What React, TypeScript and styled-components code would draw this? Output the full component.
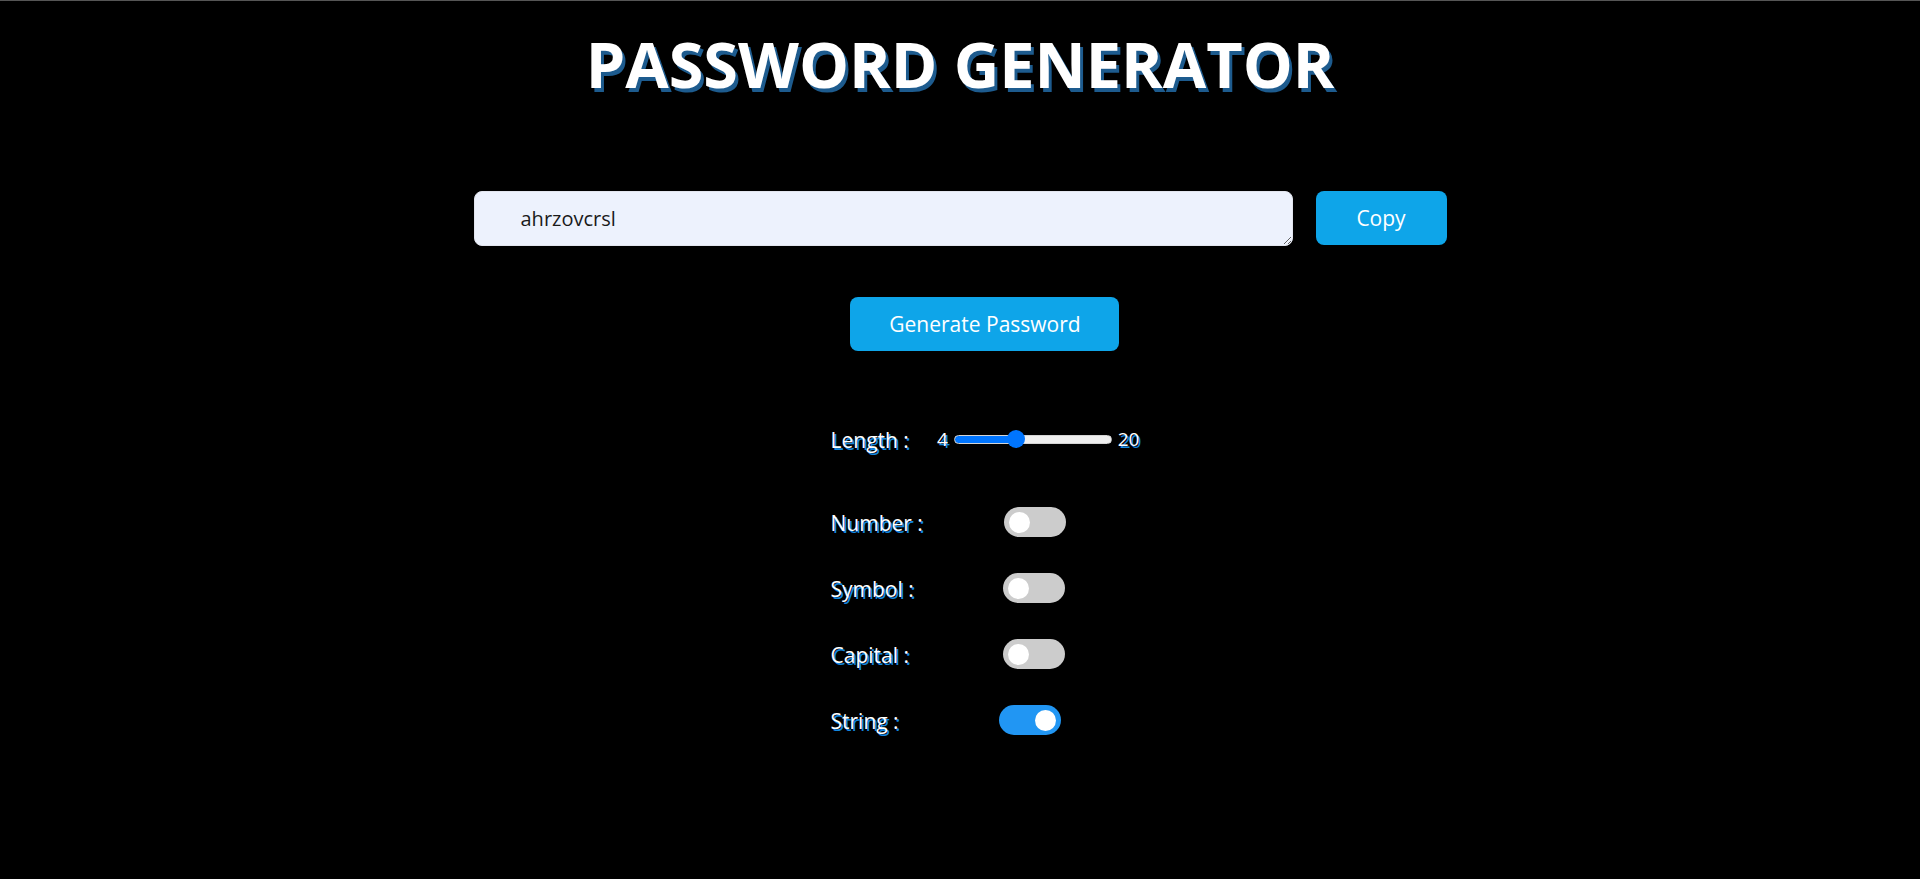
import React, { useState } from "react";
import styled, { createGlobalStyle } from "styled-components";

const Global = createGlobalStyle`
  html, body { margin: 0; padding: 0; background: #000; }
  body { font-family: "Open Sans", "Noto Sans", sans-serif; }
  * { box-sizing: border-box; }
`;

const Page = styled.div`
  min-height: 879px;
  background: #000;
  border-top: 1px solid #555;
  padding-top: 31px;
  display: flex;
  flex-direction: column;
  align-items: center;
`;

const Title = styled.h1`
  margin: 0;
  font-family: "Open Sans", "Noto Sans", sans-serif;
  font-weight: 700;
  font-size: 63px;
  line-height: 64px;
  letter-spacing: 0;
  color: #fff;
  text-shadow: 3px 4px 0 #1d5b8e;
`;

const InputRow = styled.div`
  margin-top: 95px;
  display: flex;
  align-items: flex-start;
  gap: 23px;
`;

const PasswordBox = styled.textarea`
  width: 819px;
  height: 55px;
  padding: 13px 20px 0 46px;
  border: 1px solid #e2e5ee;
  border-radius: 8px;
  background: #edf2fd;
  font-family: "Open Sans", "Noto Sans", sans-serif;
  font-size: 20px;
  line-height: 28px;
  color: #1a1a1a;
  outline: none;
`;

const Button = styled.button<{ $w: number }>`
  width: ${(p) => p.$w}px;
  height: 54px;
  border: none;
  border-radius: 8px;
  background: #0ea5e9;
  color: #fff;
  font-family: "Open Sans", "Noto Sans", sans-serif;
  font-size: 21px;
  cursor: pointer;
`;

const Lower = styled.div`
  padding-left: 50px;
  display: flex;
  flex-direction: column;
  align-items: center;
`;

const GenerateWrap = styled.div`
  margin-top: 51px;
`;

const Options = styled.div`
  margin-top: 73px;
  display: flex;
  flex-direction: column;
  align-items: flex-start;
`;

const Label = styled.span`
  font-size: 21px;
  color: #fff;
  text-shadow: 2px 2px 0 #1488e0;
  white-space: nowrap;
  position: relative;
  top: 1px;
`;

const Small = styled.span`
  font-size: 19px;
  color: #fff;
  text-shadow: 2px 2px 0 #1488e0;
`;

const LengthRow = styled.div`
  height: 30px;
  display: flex;
  align-items: center;
`;

const RangeGroup = styled.div`
  margin-left: 28px;
  display: flex;
  align-items: center;
  gap: 6px;
`;

const Range = styled.input`
  -webkit-appearance: none;
  appearance: none;
  width: 158px;
  height: 9px;
  margin: 0;
  border-radius: 5px;
  border: 1px solid #d4d4d4;
  outline: none;
  &::-webkit-slider-thumb {
    -webkit-appearance: none;
    width: 18px;
    height: 18px;
    border-radius: 50%;
    background: #0075ff;
    border: none;
    cursor: pointer;
  }
`;

const ToggleRow = styled.div<{ $shift?: number; $first?: boolean }>`
  margin-top: ${(p) => (p.$first ? 53 : 36)}px;
  height: 30px;
  display: grid;
  grid-template-columns: ${(p) => 173 + (p.$shift || 0)}px auto;
  align-items: center;
`;

const Track = styled.button<{ $on: boolean }>`
  position: relative;
  width: 62px;
  height: 30px;
  padding: 0;
  border: none;
  border-radius: 15px;
  background: ${(p) => (p.$on ? "#2196f3" : "#cccccc")};
  cursor: pointer;
`;

const Knob = styled.span<{ $on: boolean }>`
  position: absolute;
  top: 4.5px;
  left: ${(p) => (p.$on ? 36 : 5)}px;
  width: 21px;
  height: 21px;
  border-radius: 50%;
  background: #fff;
`;

type Opt = { key: string; label: string; shift?: number };

const opts: Opt[] = [
  { key: "number", label: "Number :" },
  { key: "symbol", label: "Symbol :", shift: -1 },
  { key: "capital", label: "Capital :", shift: -1 },
  { key: "string", label: "String :", shift: -5 },
];

export default function App() {
  const [len, setLen] = useState(10);
  const [flags, setFlags] = useState<Record<string, boolean>>({
    number: false,
    symbol: false,
    capital: false,
    string: true,
  });
  const frac = ((len - 4) / 16) * 100;
  return (
    <Page>
      <Global />
      <Title>PASSWORD GENERATOR</Title>
      <InputRow>
        <PasswordBox rows={1} readOnly value="ahrzovcrsl" />
        <Button $w={131}>Copy</Button>
      </InputRow>
      <Lower>
        <GenerateWrap>
          <Button $w={269}>Generate Password</Button>
        </GenerateWrap>
        <Options>
          <LengthRow>
            <Label>Length :</Label>
            <RangeGroup>
              <Small>4</Small>
              <Range
                type="range"
                min={4}
                max={20}
                value={len}
                onChange={(e) => setLen(Number(e.target.value))}
                style={{
                  background: `linear-gradient(to right, #0075ff ${frac}%, #efefef ${frac}%)`,
                }}
              />
              <Small>20</Small>
            </RangeGroup>
          </LengthRow>
          {opts.map((o, i) => (
            <ToggleRow key={o.key} $shift={o.shift} $first={i === 0}>
              <Label>{o.label}</Label>
              <Track
                $on={flags[o.key]}
                onClick={() => setFlags({ ...flags, [o.key]: !flags[o.key] })}
              >
                <Knob $on={flags[o.key]} />
              </Track>
            </ToggleRow>
          ))}
        </Options>
      </Lower>
    </Page>
  );
}
